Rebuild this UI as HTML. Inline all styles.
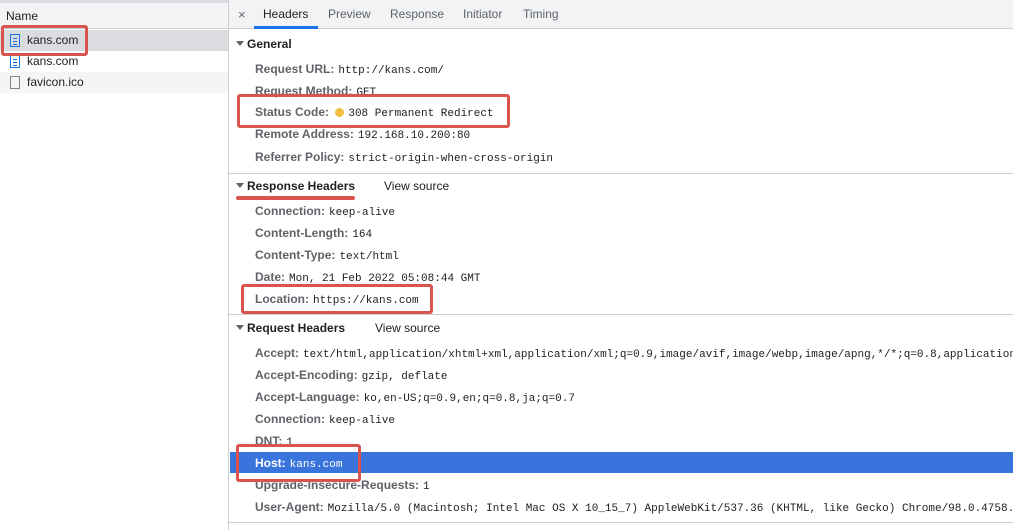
<!DOCTYPE html>
<html><head><style>
*{margin:0;padding:0;box-sizing:border-box}
html,body{width:1013px;height:530px;overflow:hidden}
body{background:#fff;font-family:"Liberation Sans",sans-serif;font-size:12px;color:#202124;position:relative}
.abs{position:absolute}
.left{left:0;top:0;width:229px;height:530px;border-right:1px solid #cbcdd1}
.lrow{position:absolute;left:0;width:228px;height:21px;line-height:21px;padding-left:27px;font-size:12px}
.ic{position:absolute;left:10px;top:4px;width:10px;height:13px;border:1px solid #1a73e8}
.ic i{position:absolute;left:2px;width:4px;height:1px;background:#1a73e8}
.tabs{left:229px;top:0;right:0;height:29px;border-bottom:1px solid #cbcdd1;background:#f1f3f4}
.tab{position:absolute;top:0;height:29px;line-height:29px;color:#5f6368;font-size:12px}
.row{position:absolute;left:255px;right:0;overflow:hidden;white-space:nowrap;font-size:12px;line-height:14px}
.row b{color:#5f6368;font-weight:bold}
.row code{font-family:"Liberation Mono",monospace;font-size:11px;color:#202124;margin-left:4px;vertical-align:0}
.sec{position:absolute;left:236px;font-weight:bold;font-size:12px}
.sec:before{content:"";display:inline-block;border-left:4px solid transparent;border-right:4px solid transparent;border-top:5px solid #5f6368;margin-right:3px;vertical-align:2px}
.vs{position:absolute;font-size:12px}
.hr{position:absolute;left:229px;right:0;height:1px;background:#cbcdd1}
.red{position:absolute;border:3px solid #d9534f;border-radius:3px}
</style></head><body>
<div class="abs left">
 <div class="abs" style="left:0;top:0;width:228px;height:29px;background:#f1f3f4;border-bottom:1px solid #cbcdd1;border-top:3px solid #dadce0"></div>
 <div class="abs" style="left:6px;top:9px;font-size:12px;color:#202124">Name</div>
 <div class="lrow" style="top:30px;background:#dadce0"><div class="ic"><i style="top:3px"></i><i style="top:6px"></i><i style="top:9px"></i></div>kans.com</div>
 <div class="lrow" style="top:51px"><div class="ic"><i style="top:3px"></i><i style="top:6px"></i><i style="top:9px"></i></div>kans.com</div>
 <div class="lrow" style="top:72px;background:#f5f5f5"><div class="ic" style="border-color:#80868b"></div>favicon.ico</div>
</div>
<div class="abs tabs">
 <div class="tab" style="left:9px;font-size:13px">×</div>
 <div class="tab" style="left:34px;color:#202124">Headers</div>
 <div class="abs" style="left:25px;top:26px;width:64px;height:3px;background:#1a73e8"></div>
 <div class="tab" style="left:99px">Preview</div>
 <div class="tab" style="left:161px">Response</div>
 <div class="tab" style="left:234px">Initiator</div>
 <div class="tab" style="left:294px">Timing</div>
</div>
<div class="sec" style="top:37px">General</div>
<div class="row" style="top:62px"><b>Request URL:</b><code>http://kans.com/</code></div>
<div class="row" style="top:84px"><b>Request Method:</b><code>GET</code></div>
<div class="row" style="top:105px"><b>Status Code:</b> <span style="display:inline-block;width:9px;height:9px;border-radius:50%;background:#f2be42;margin-left:3px;vertical-align:-1px"></span><code>308 Permanent Redirect</code></div>
<div class="row" style="top:127px"><b>Remote Address:</b><code>192.168.10.200:80</code></div>
<div class="row" style="top:150px"><b>Referrer Policy:</b><code>strict-origin-when-cross-origin</code></div>
<div class="hr" style="top:173px"></div>
<div class="sec" style="top:179px">Response Headers</div><div class="vs" style="left:384px;top:179px">View source</div>
<div class="row" style="top:204px"><b>Connection:</b><code>keep-alive</code></div>
<div class="row" style="top:226px"><b>Content-Length:</b><code>164</code></div>
<div class="row" style="top:248px"><b>Content-Type:</b><code>text/html</code></div>
<div class="row" style="top:270px"><b>Date:</b><code>Mon, 21 Feb 2022 05:08:44 GMT</code></div>
<div class="row" style="top:292px"><b>Location:</b><code>https://kans.com</code></div>
<div class="hr" style="top:314px"></div>
<div class="sec" style="top:321px">Request Headers</div><div class="vs" style="left:375px;top:321px">View source</div>
<div class="row" style="top:346px"><b>Accept:</b><code>text/html,application/xhtml+xml,application/xml;q=0.9,image/avif,image/webp,image/apng,*/*;q=0.8,application/signed-exchange</code></div>
<div class="row" style="top:368px"><b>Accept-Encoding:</b><code>gzip, deflate</code></div>
<div class="row" style="top:390px"><b>Accept-Language:</b><code>ko,en-US;q=0.9,en;q=0.8,ja;q=0.7</code></div>
<div class="row" style="top:412px"><b>Connection:</b><code>keep-alive</code></div>
<div class="row" style="top:434px"><b>DNT:</b><code>1</code></div>
<div class="abs" style="left:230px;right:0;top:452px;height:21px;background:#3874db"></div>
<div class="row" style="top:456px"><b style="color:#fff">Host:</b><code style="color:#fff">kans.com</code></div>
<div class="row" style="top:478px"><b>Upgrade-Insecure-Requests:</b><code>1</code></div>
<div class="row" style="top:500px"><b>User-Agent:</b><code>Mozilla/5.0 (Macintosh; Intel Mac OS X 10_15_7) AppleWebKit/537.36 (KHTML, like Gecko) Chrome/98.0.4758.102</code></div>
<div class="hr" style="top:522px"></div>
<div class="red" style="left:1px;top:25px;width:87px;height:31px"></div>
<div class="red" style="left:237px;top:94px;width:273px;height:34px"></div>
<div class="abs" style="left:236px;top:196px;width:119px;height:4px;background:#d9534f;border-radius:2px"></div>
<div class="red" style="left:241px;top:284px;width:192px;height:30px"></div>
<div class="red" style="left:236px;top:444px;width:125px;height:38px"></div>
</body></html>
